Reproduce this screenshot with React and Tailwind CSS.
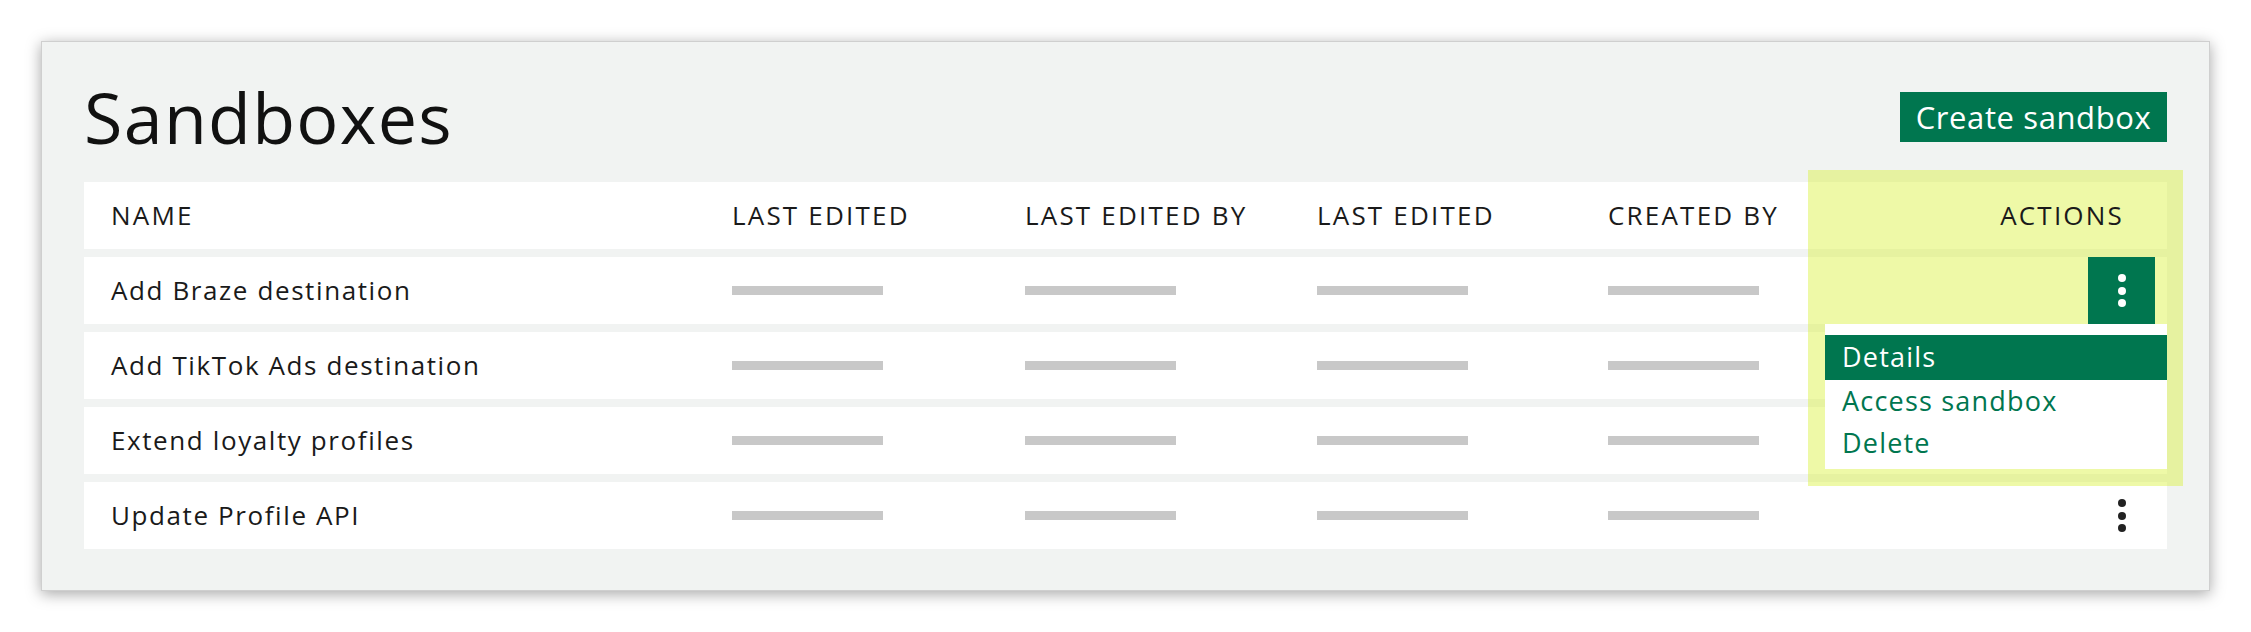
import React from 'react'

const font = { fontFamily: '"Open Sans", "Liberation Sans", sans-serif' }

const rows = [
  { name: 'Add Braze destination', open: true },
  { name: 'Add TikTok Ads destination' },
  { name: 'Extend loyalty profiles' },
  { name: 'Update Profile API' },
]

function Dots({ light }) {
  return (
    <div className="flex flex-col items-center gap-[4.5px]">
      <span className={`block w-2 h-2 rounded-full ${light ? 'bg-white' : 'bg-[#222]'}`} />
      <span className={`block w-2 h-2 rounded-full ${light ? 'bg-white' : 'bg-[#222]'}`} />
      <span className={`block w-2 h-2 rounded-full ${light ? 'bg-white' : 'bg-[#222]'}`} />
    </div>
  )
}

function Bar() {
  return <div className="w-[151px] h-[9px] bg-[#c8c8c8]" />
}

export default function App() {
  return (
    <div className="min-h-screen bg-white p-[41px]" style={font}>
      <div className="bg-[#f1f3f2] px-[42px] pt-[25px] pb-[41px] border border-[#cfcfcf] shadow-[0_3px_14px_rgba(0,0,0,0.35)]">
        {/* Header */}
        <div className="flex items-center justify-between h-[100px]">
          <h1 className="text-[70px] leading-none text-[#111] tracking-[1.3px]">Sandboxes</h1>
          <button className="h-[50px] w-[267px] bg-[#00764f] text-white text-[31px] leading-none tracking-[0.6px]">
            Create sandbox
          </button>
        </div>

        {/* Table */}
        <div className="relative mt-[15px] flex flex-col gap-2 text-[#1a1a1a]">
          <div className="grid grid-cols-[621px_293px_292px_291px_291px_1fr] items-center h-[67px] bg-white pl-[27px] text-[26px] tracking-[2.2px]">
            <span>NAME</span>
            <span>LAST EDITED</span>
            <span>LAST EDITED BY</span>
            <span>LAST EDITED</span>
            <span>CREATED BY</span>
            <span className="relative z-20 text-right pr-[43px]">ACTIONS</span>
          </div>

          {rows.map((r) => (
            <div
              key={r.name}
              className="grid grid-cols-[621px_293px_292px_291px_291px_1fr] items-center h-[67px] bg-white pl-[27px] text-[26px] tracking-[1.6px]"
            >
              <span>{r.name}</span>
              <Bar />
              <Bar />
              <Bar />
              <Bar />
              <div className="flex justify-end pr-[12px] h-full items-center">
                {r.open ? (
                  <button className="relative z-20 w-[67px] h-[67px] bg-[#00764f] flex items-center justify-center">
                    <Dots light />
                  </button>
                ) : (
                  <button className="w-[67px] h-[67px] flex items-center justify-center">
                    <Dots />
                  </button>
                )}
              </div>
            </div>
          ))}

          {/* highlight overlay */}
          <div className="absolute top-[-12px] right-[-16px] w-[375px] h-[316px] bg-[rgba(217,242,60,0.45)] z-10" />

          {/* dropdown */}
          <div className="absolute top-[142px] right-0 w-[342px] z-20 bg-white pt-[11px] pb-[5px] text-[27px] tracking-[1.2px] text-[#00764f]">
            <div className="h-[45px] flex items-center px-[17px] bg-[#00764f] text-white">Details</div>
            <div className="h-[42px] flex items-center px-[17px]">Access sandbox</div>
            <div className="h-[42px] flex items-center px-[17px]">Delete</div>
          </div>
        </div>
      </div>
    </div>
  )
}
